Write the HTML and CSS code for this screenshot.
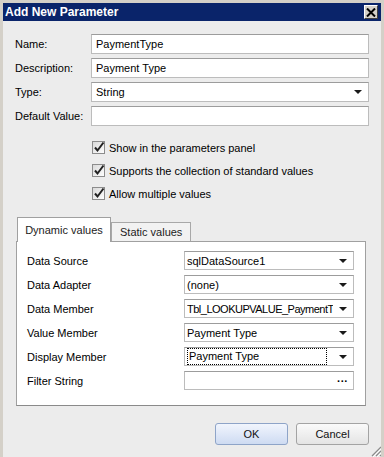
FILE: index.html
```
<!DOCTYPE html>
<html lang="en">
<head>
    <meta charset="UTF-8">
    <title>Add New Parameter</title>
    <link rel="stylesheet" href="styles.css">
</head>
<body>
    <div class="window">
        <div class="titlebar">
            <span class="title">Add New Parameter</span>
            <span class="close">
                <svg width="10" height="9" viewBox="0 0 10 9"><path d="M1 0.5 L9 8.5 M9 0.5 L1 8.5" stroke="#000" stroke-width="2"/></svg>
            </span>
        </div>

        <div class="content">
            <div class="fields">
                <label>Name:</label>
                <div class="input">PaymentType</div>
                <label>Description:</label>
                <div class="input">Payment Type</div>
                <label>Type:</label>
                <div class="input combo"><span>String</span><i class="arrow"></i></div>
                <label>Default Value:</label>
                <div class="input"></div>
            </div>

            <div class="checks">
                <div class="check"><span class="box"><svg width="13" height="13" viewBox="0 0 13 13"><defs><linearGradient id="g" x1="0" y1="0" x2="1" y2="1"><stop offset="0" stop-color="#d8d8d8"/><stop offset="1" stop-color="#ffffff"/></linearGradient></defs><rect x="0.5" y="0.5" width="12" height="12" fill="url(#g)" stroke="#8c8c8c"/><path d="M3 6.5 L5.5 9.5 L11.5 1.5" fill="none" stroke="#222" stroke-width="2"/></svg></span>Show in the parameters panel</div>
                <div class="check"><span class="box"><svg width="13" height="13" viewBox="0 0 13 13"><rect x="0.5" y="0.5" width="12" height="12" fill="url(#g)" stroke="#8c8c8c"/><path d="M3 6.5 L5.5 9.5 L11.5 1.5" fill="none" stroke="#222" stroke-width="2"/></svg></span>Supports the collection of standard values</div>
                <div class="check"><span class="box"><svg width="13" height="13" viewBox="0 0 13 13"><rect x="0.5" y="0.5" width="12" height="12" fill="url(#g)" stroke="#8c8c8c"/><path d="M3 6.5 L5.5 9.5 L11.5 1.5" fill="none" stroke="#222" stroke-width="2"/></svg></span>Allow multiple values</div>
            </div>

            <div class="tabs">
                <div class="tab active">Dynamic values</div>
                <div class="tab">Static values</div>
            </div>
            <div class="panel">
                <label>Data Source</label>
                <div class="input combo small"><span>sqlDataSource1</span><i class="arrow"></i></div>
                <label>Data Adapter</label>
                <div class="input combo small"><span>(none)</span><i class="arrow"></i></div>
                <label>Data Member</label>
                <div class="input combo small"><span class="tight">Tbl_LOOKUPVALUE_PaymentT</span><i class="arrow"></i></div>
                <label>Value Member</label>
                <div class="input combo small"><span>Payment Type</span><i class="arrow"></i></div>
                <label>Display Member</label>
                <div class="input combo small"><span class="focus">Payment Type</span><i class="arrow"></i></div>
                <label>Filter String</label>
                <div class="input combo small"><span></span><b class="dots">&middot;&middot;&middot;</b></div>
            </div>

            <div class="buttons">
                <button class="btn ok">OK</button>
                <button class="btn">Cancel</button>
            </div>
        </div>

        <svg class="grip" width="12" height="12" viewBox="0 0 12 12">
            <path d="M11 2 L2 11 M11 6 L6 11 M11 10 L10 11" stroke="#8a8a8a" stroke-width="1.2"/>
            <path d="M12 3 L3 12 M12 7 L7 12" stroke="#fff" stroke-width="1"/>
        </svg>
    </div>
</body>
</html>
```

FILE: styles.css
```
body {
    margin: 0;
    background-color: #ececec;
    font-family: "Liberation Sans", Arial, sans-serif;
    font-size: 11px;
    color: #000;
}

.window {
    position: relative;
    width: 384px;
    height: 457px;
    box-sizing: border-box;
    border-top: 3px solid #d4d0c8;
    border-left: 3px solid #d4d0c8;
    border-right: 3px solid #d4d0c8;
    background-color: #ececec;
    overflow: hidden;
}

.titlebar {
    height: 18px;
    background-color: #0a246a;
    color: white;
    display: flex;
    align-items: center;
    justify-content: space-between;
    padding: 0 3px 0 2px;
}

.title {
    font-weight: bold;
    font-size: 12px;
}

.close {
    width: 14px;
    height: 14px;
    box-sizing: border-box;
    background-color: #d4d0c8;
    border: 1px solid;
    border-color: #fff #404040 #404040 #fff;
    display: flex;
    align-items: center;
    justify-content: center;
}

.content {
    padding: 13px 12px 0 12px;
}

.fields {
    display: grid;
    grid-template-columns: 76px 278px;
    grid-auto-rows: 20px;
    row-gap: 4px;
    align-items: center;
}

.input {
    height: 100%;
    box-sizing: border-box;
    background-color: white;
    border: 1px solid #bcbcbc;
    border-top-color: #9c9c9c;
    padding: 0 4px;
    display: flex;
    align-items: center;
    white-space: nowrap;
    overflow: hidden;
}

.combo {
    justify-content: space-between;
    padding-right: 6px;
}

.combo span {
    overflow: hidden;
    flex: 1;
}

.combo .tight {
    letter-spacing: -0.5px;
}

.arrow {
    width: 0;
    height: 0;
    border-left: 4px solid transparent;
    border-right: 4px solid transparent;
    border-top: 4px solid #1a1a1a;
    margin-left: 6px;
    flex-shrink: 0;
}

.checks {
    margin: 10px 0 0 77px;
}

.check {
    height: 23px;
    display: flex;
    align-items: center;
}

.box {
    display: flex;
    margin-right: 4px;
}

.tabs {
    display: flex;
    align-items: flex-end;
    margin: 12px 0 0 2px;
    height: 24px;
}

.tab {
    height: 19px;
    box-sizing: border-box;
    padding: 0 8px;
    display: flex;
    align-items: center;
    border: 1px solid #a8a8a8;
    border-bottom: none;
    background-color: #f2f2f2;
    color: #222;
}

.tab.active {
    height: 25px;
    width: 94px;
    margin-bottom: -1px;
    background-color: white;
    justify-content: center;
    padding: 0;
    position: relative;
    z-index: 1;
    border-color: #a0a0a0;
}

.panel {
    margin-left: 1px;
    width: 350px;
    height: 165px;
    box-sizing: border-box;
    background-color: white;
    border: 1px solid #a0a0a0;
    border-bottom-color: #8a8a8a;
    padding: 9px 11px 0 10px;
    display: grid;
    grid-template-columns: 157px 170px;
    grid-auto-rows: 19px;
    row-gap: 5px;
    align-items: center;
    align-content: start;
}

.input.small {
    padding-left: 2px;
}

.focus {
    border: 1px dotted #000;
    line-height: 15px;
    padding-left: 1px;
    margin-right: 6px;
}

.dots {
    font-weight: bold;
    margin-right: -1px;
}

.buttons {
    display: flex;
    justify-content: flex-end;
    gap: 8px;
    margin-top: 17px;
}

.btn {
    width: 73px;
    height: 22px;
    border: 1px solid #a3a3a3;
    border-radius: 3px;
    background: linear-gradient(#fafafa, #e4e4e4);
    font-family: "Liberation Sans", Arial, sans-serif;
    font-size: 11px;
    color: #111;
    padding: 0;
}

.btn.ok {
    border-color: #8ea4c8;
    background: linear-gradient(#f1f5fd, #cedbf2);
}

.grip {
    position: absolute;
    right: -1px;
    bottom: 0;
}
```
